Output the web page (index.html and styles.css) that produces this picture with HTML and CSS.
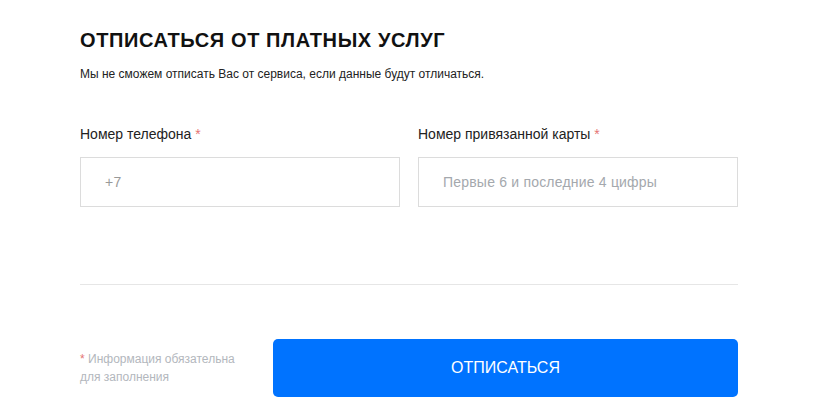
FILE: index.html
```html
<!DOCTYPE html>
<html lang="ru">
<head>
<meta charset="utf-8">
<link rel="stylesheet" href="styles.css">
</head>
<body>
<div class="page">
  <h1 class="title">ОТПИСАТЬСЯ ОТ ПЛАТНЫХ УСЛУГ</h1>
  <p class="subtitle">Мы не сможем отписать Вас от сервиса, если данные будут отличаться.</p>
  <div class="fields">
    <div class="field">
      <label class="label">Номер телефона <span class="req">*</span></label>
      <div class="input"><span class="ph ph-dark">+7</span></div>
    </div>
    <div class="field">
      <label class="label">Номер привязанной карты <span class="req">*</span></label>
      <div class="input"><span class="ph">Первые 6 и последние 4 цифры</span></div>
    </div>
  </div>
  <div class="divider"></div>
  <div class="footer">
    <div class="note"><span class="req">*</span> Информация обязательна<br>для заполнения</div>
    <button class="btn">ОТПИСАТЬСЯ</button>
  </div>
</div>
</body>
</html>
```
FILE: styles.css
```css
html, body { margin: 0; padding: 0; background: #fff; }
body { font-family: "Liberation Sans", Arial, sans-serif; color: #1a1a1a; }
.page { width: 658px; padding: 28px 0 0 80px; }
.title { margin: 0; font-size: 20px; line-height: 24px; font-weight: 700; color: #111; letter-spacing: 0.6px; }
.subtitle { margin: 15px 0 0; font-size: 12px; line-height: 15px; color: #222; }
.fields { display: flex; gap: 18px; margin-top: 43px; }
.field { flex: 1; display: flex; flex-direction: column; }
.label { font-size: 14px; line-height: 18px; color: #222; }
.req { color: #e57373; }
.input { margin-top: 14px; height: 48px; border: 1px solid #dcdcdc; display: flex; align-items: center; padding-left: 24px; }
.ph { font-size: 14px; color: #a4a8ad; letter-spacing: 0.2px; }
.ph-dark { color: #999; }
.divider { margin-top: 77px; height: 1px; background: #e6e6e6; }
.footer { display: flex; align-items: center; margin-top: 54px; }
.note { width: 193px; font-size: 12px; line-height: 18px; color: #b3b7bd; }
.btn { flex: 1; height: 58px; border: 0; border-radius: 5px; background: #0073ff; color: #fff; font-family: "Liberation Sans", Arial, sans-serif; font-size: 16px; padding: 0; }
```
